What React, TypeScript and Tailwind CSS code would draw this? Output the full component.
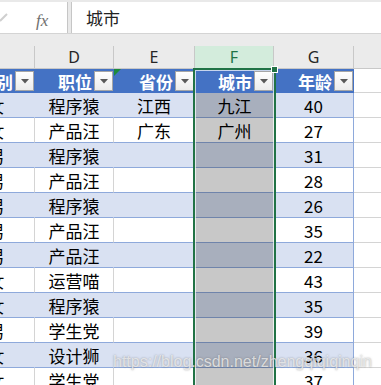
import React from "react";

type Row = { c: string; d: string; e?: string; f?: string; g: number };

const rows: Row[] = [
  { c: "女", d: "程序猿", e: "江西", f: "九江", g: 40 },
  { c: "女", d: "产品汪", e: "广东", f: "广州", g: 27 },
  { c: "男", d: "程序猿", g: 31 },
  { c: "男", d: "产品汪", g: 28 },
  { c: "男", d: "程序猿", g: 26 },
  { c: "男", d: "产品汪", g: 35 },
  { c: "男", d: "产品汪", g: 22 },
  { c: "女", d: "运营喵", g: 43 },
  { c: "女", d: "程序猿", g: 35 },
  { c: "男", d: "学生党", g: 39 },
  { c: "女", d: "设计狮", g: 36 },
  { c: "女", d: "学生党", g: 37 },
];

// small filter dropdown button in the table header
function FilterButton() {
  return (
    <div className="shrink-0 w-[19px] h-[20px] ml-[2px] mr-[1px] flex items-center justify-center border border-[#a6a6a6] bg-gradient-to-b from-white to-[#ececec]">
      <svg width="8" height="5" viewBox="0 0 8 5">
        <polygon points="0,0 8,0 4,4.5" fill="#595959" />
      </svg>
    </div>
  );
}

function HeaderCell({ label, width }: { label: string; width: string }) {
  return (
    <div className={`${width} shrink-0 h-full overflow-hidden flex items-center justify-end bg-[#4472c4]`}>
      <span className="whitespace-nowrap text-white font-bold text-[17px] leading-none">{label}</span>
      <FilterButton />
    </div>
  );
}

function DataRow({ r, band }: { r: Row; band: boolean }) {
  const fill = band ? "bg-[#d9e1f2]" : "bg-white";
  const vline = band ? "border-r-[#d9e1f2]" : "border-r-[#d4d4d4]";
  const selFill = band ? "bg-[#a8afbd]" : "bg-[#c8c8c8]";
  return (
    <div className="flex h-[25px] text-[17px] leading-none text-black">
      <div className={`w-[35px] shrink-0 overflow-hidden flex items-center border-r border-b border-b-[#8ea9db] ${vline} ${fill}`}>
        <div className="shrink-0 w-[80px] -ml-[44px] text-center">{r.c}</div>
      </div>
      <div className={`w-[79px] shrink-0 flex items-center justify-center border-r border-b border-b-[#8ea9db] ${vline} ${fill}`}>
        {r.d}
      </div>
      <div className={`w-[81px] shrink-0 flex items-center justify-center border-r border-b border-b-[#8ea9db] ${vline} ${fill}`}>
        {r.e}
      </div>
      <div className={`w-[79px] shrink-0 flex items-center justify-center border-b border-b-[#6f84ab] ${selFill}`}>
        {r.f}
      </div>
      <div className={`w-[80px] shrink-0 flex items-center justify-center border-r border-b border-b-[#8ea9db] border-r-[#8ea9db] ${fill}`}>
        {r.g}
      </div>
      <div className="flex-1 bg-white border-b border-[#d4d4d4]" />
    </div>
  );
}

export default function App() {
  return (
    <div className="relative w-[381px] h-[385px] overflow-hidden bg-white font-['Noto_Sans_CJK_SC',sans-serif]">
      {/* Formula bar */}
      <div className="flex h-[33px] bg-[#e9e9e9] pt-[2px]">
        <div className="relative w-[68px] shrink-0 bg-white border-r border-[#c6c6c6]">
          <svg className="absolute left-0 top-[10px]" width="8" height="10" viewBox="0 0 8 10">
            <line x1="0" y1="9" x2="7" y2="2" stroke="#cfcfcf" strokeWidth="2" />
          </svg>
          <span className="absolute left-[36px] top-[6px] italic text-[17px] text-[#6f6f6f] font-['Liberation_Serif',serif]">
            fx
          </span>
        </div>
        <div className="ml-[3px] flex-1 bg-white border-l border-[#c6c6c6] flex items-center pl-[14px] text-[17px] text-[#222]">
          城市
        </div>
      </div>

      {/* gap under formula bar */}
      <div className="h-[13px] bg-[#ebebeb] border-t border-[#d4d4d4]" />

      {/* Column letters */}
      <div className="flex h-[22px] bg-[#ebebeb] text-[16px] text-[#262626] font-['Noto_Sans',sans-serif] leading-none">
        <div className="w-[35px] shrink-0 border-r border-[#c8c8c8]" />
        <div className="w-[79px] shrink-0 border-r border-[#c8c8c8] flex items-center justify-center">D</div>
        <div className="w-[81px] shrink-0 border-r border-[#c8c8c8] flex items-center justify-center">E</div>
        <div className="w-[79px] shrink-0 border-r border-[#c8c8c8] flex items-center justify-center bg-[#d3ecdc] text-[#217346]">
          F
        </div>
        <div className="w-[80px] shrink-0 border-r border-[#c8c8c8] flex items-center justify-center">G</div>
        <div className="flex-1" />
      </div>

      {/* Table header row */}
      <div className="flex h-[25px] border-t border-[#c8c8c8]">
        <HeaderCell label="性别" width="w-[35px]" />
        <HeaderCell label="职位" width="w-[79px]" />
        <div className="relative">
          <HeaderCell label="省份" width="w-[81px]" />
          <svg className="absolute left-0 top-0" width="7" height="7" viewBox="0 0 7 7">
            <polygon points="0,0 7,0 0,7" fill="#1e8a3c" />
          </svg>
        </div>
        <HeaderCell label="城市" width="w-[79px]" />
        <HeaderCell label="年龄" width="w-[80px]" />
        <div className="flex-1 bg-white border-b border-[#d4d4d4]" />
      </div>

      {/* Data rows */}
      {rows.map((r, i) => (
        <DataRow key={i} r={r} band={i % 2 === 0} />
      ))}

      {/* Selection of column F */}
      <div className="absolute top-[68px] left-[193px] w-[83px] bottom-[-4px] border-2 border-[#217346]">
        <div className="absolute inset-0 border border-white/70" />
      </div>
      <div className="absolute top-[66px] left-[271px] w-[7px] h-[7px] bg-[#217346] border border-white" />

      {/* Watermark */}
      <div className="absolute left-[113px] top-[354px] whitespace-nowrap text-[16px] leading-none text-[#f0f0f0]/80 font-['Liberation_Sans',sans-serif] [text-shadow:0_0_2px_rgba(80,80,80,0.55)]">
        https://blog.csdn.net/zhengqiqiqinqin
      </div>
    </div>
  );
}
